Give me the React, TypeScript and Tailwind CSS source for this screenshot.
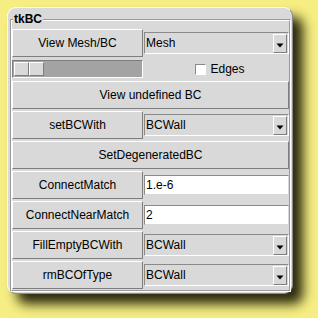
// tkBC panel — Tk style dialog
const font = "font-['Liberation_Sans',Arial,sans-serif]";

function TkButton({ label, className = "" }: { label: string; className?: string }) {
  return (
    <div
      className={`flex items-center justify-center h-[28px] bg-[#d9d9d9] border border-t-white border-l-white border-b-[#7e7e7e] border-r-[#7e7e7e] text-[12px] text-black ${className}`}
    >
      {label}
    </div>
  );
}

function Combo({ value }: { value: string }) {
  return (
    <div className="flex-1 h-[22px] flex items-center bg-[#d9d9d9] border border-t-[#8a8a8a] border-l-[#8a8a8a] border-b-white border-r-white pl-[1px]">
      <span className="flex-1 text-[12px] text-black">{value}</span>
      <div className="w-[14px] h-[19px] mr-[1px] flex items-end justify-center pb-[4px] bg-[#d9d9d9] border border-t-white border-l-white border-b-[#7e7e7e] border-r-[#7e7e7e]">
        <svg width="8" height="5" viewBox="0 0 8 5">
          <path d="M0.5 0.5 L7.5 0.5 L4 4.5 Z" fill="#000" />
        </svg>
      </div>
    </div>
  );
}

function Entry({ value }: { value: string }) {
  return (
    <div className="flex-1 h-[20px] flex items-center bg-white border border-t-[#8a8a8a] border-l-[#8a8a8a] border-b-[#d9d9d9] border-r-[#d9d9d9] pl-[1px] text-[12px] text-black">
      {value}
    </div>
  );
}

function Row({ children }: { children: React.ReactNode }) {
  return <div className="flex items-center gap-[1px] h-[28px]">{children}</div>;
}

export default function App() {
  return (
    <div className={`w-[318px] h-[318px] bg-[#f6ee83] pt-[7px] pl-[7px] ${font}`}>
      <div className="w-[286px] h-[287px] bg-[#d9d9d9] rounded-[9px] border border-t-white border-l-white border-b-[#8c8c8c] border-r-[#8c8c8c] shadow-[10px_10px_12px_rgba(20,20,0,0.9)] pl-[2px] pt-[11px]">
        {/* labelframe groove */}
        <div className="relative w-[281px] h-[273px] border border-t-[#9a9a9a] border-l-[#9a9a9a] border-b-white border-r-white">
          <span className="absolute -top-[8px] left-[2px] bg-[#d9d9d9] px-[1px] text-[12px] font-bold leading-[14px] text-black">
            tkBC
          </span>
          <div className="h-full border border-t-white border-l-white border-b-[#9a9a9a] border-r-[#9a9a9a] pt-[8px] flex flex-col gap-[2px]">
            <Row>
              <TkButton label="View Mesh/BC" className="w-[131px]" />
              <Combo value="Mesh" />
            </Row>

            <div className="flex items-center h-[20px]">
              <div className="w-[131px] h-[18px] bg-[#a3a3a3] border border-t-[#7e7e7e] border-l-[#7e7e7e] border-b-white border-r-white flex items-center pl-[1px]">
                <div className="w-[15px] h-[14px] bg-[#d9d9d9] border border-t-white border-l-white border-b-[#7e7e7e] border-r-[#7e7e7e]" />
                <div className="w-[15px] h-[14px] bg-[#d9d9d9] border border-t-white border-l-white border-b-[#7e7e7e] border-r-[#7e7e7e]" />
              </div>
              <div className="flex-1 flex items-center justify-center gap-[4px] pl-[8px]">
                <div className="w-[11px] h-[11px] bg-white border border-t-[#8a8a8a] border-l-[#8a8a8a] border-b-white border-r-white" />
                <span className="text-[12px] text-black">Edges</span>
              </div>
            </div>

            <TkButton label="View undefined BC" />

            <Row>
              <TkButton label="setBCWith" className="w-[131px]" />
              <Combo value="BCWall" />
            </Row>

            <TkButton label="SetDegeneratedBC" />

            <Row>
              <TkButton label="ConnectMatch" className="w-[131px]" />
              <Entry value="1.e-6" />
            </Row>

            <Row>
              <TkButton label="ConnectNearMatch" className="w-[131px]" />
              <Entry value="2" />
            </Row>

            <Row>
              <TkButton label="FillEmptyBCWith" className="w-[131px]" />
              <Combo value="BCWall" />
            </Row>

            <Row>
              <TkButton label="rmBCOfType" className="w-[131px]" />
              <Combo value="BCWall" />
            </Row>
          </div>
        </div>
      </div>
    </div>
  );
}
